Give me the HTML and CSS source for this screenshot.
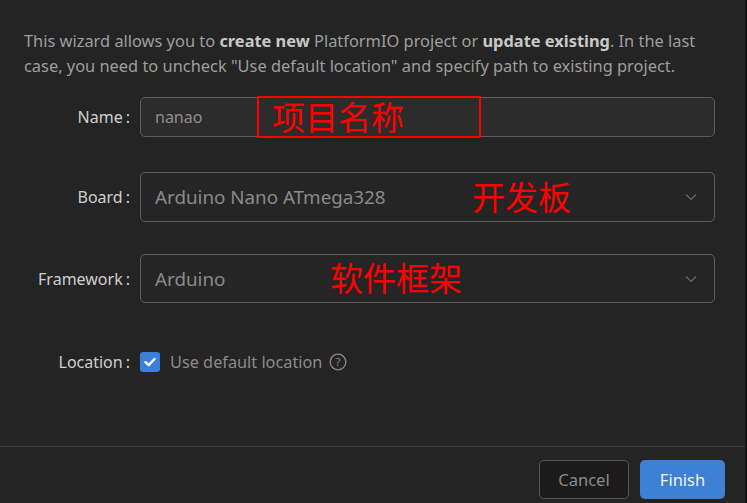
FILE: index.html
```html
<!DOCTYPE html>
<html>
<head>
<meta charset="utf-8">
<link rel="stylesheet" href="styles.css">
</head>
<body>
<div class="dialog">
  <div class="content">
    <p class="intro">This wizard allows you to <b>create new</b> PlatformIO project or <b>update existing</b>. In the last case, you need to uncheck "Use default location" and specify path to existing project.</p>
    <div class="form">
      <div class="row row-name">
        <label class="label">Name<span class="colon">:</span></label>
        <div class="field input">
          <span class="value">nanao</span>
          <div class="note note-box"><span class="note-text">项目名称</span></div>
        </div>
      </div>
      <div class="row row-board">
        <label class="label">Board<span class="colon">:</span></label>
        <div class="field select">
          <span class="value">Arduino Nano ATmega328</span>
          <span class="note note-board">开发板</span>
          <svg class="chev" width="12" height="8" viewBox="0 0 12 8"><path d="M1 1.5 L6 6.5 L11 1.5" fill="none" stroke="#6b6b6b" stroke-width="1.2"/></svg>
        </div>
      </div>
      <div class="row row-fw">
        <label class="label">Framework<span class="colon">:</span></label>
        <div class="field select select-fw">
          <span class="value">Arduino</span>
          <span class="note note-fw">软件框架</span>
          <svg class="chev" width="12" height="8" viewBox="0 0 12 8"><path d="M1 1.5 L6 6.5 L11 1.5" fill="none" stroke="#6b6b6b" stroke-width="1.2"/></svg>
        </div>
      </div>
      <div class="row row-loc">
        <label class="label">Location<span class="colon">:</span></label>
        <div class="check">
          <span class="box"><svg width="20" height="20" viewBox="0 0 20 20"><path d="M5.5 10.2 L8.6 13.2 L14.6 7" fill="none" stroke="#fff" stroke-width="2.4" stroke-linecap="round" stroke-linejoin="round"/></svg></span>
          <span class="check-text">Use default location</span>
          <svg class="help" width="18" height="18" viewBox="0 0 18 18"><circle cx="9" cy="9" r="7.8" fill="none" stroke="#8a8a8a" stroke-width="1.3"/><text x="9" y="13.2" text-anchor="middle" font-family="Noto Sans, sans-serif" font-size="11.5" fill="#8a8a8a">?</text></svg>
        </div>
      </div>
    </div>
  </div>
  <div class="footer">
    <button class="btn btn-cancel">Cancel</button>
    <button class="btn btn-finish">Finish</button>
  </div>
  <div class="edge"></div>
</div>
</body>
</html>
```
FILE: styles.css
```css
html, body {
  margin: 0;
  padding: 0;
  background: #242424;
  height: 100%;
  overflow: hidden;
}
body {
  font-family: "Noto Sans", "Open Sans", sans-serif;
}
.dialog {
  position: relative;
  width: 747px;
  height: 503px;
  display: flex;
  flex-direction: column;
}
.content {
  padding: 28px 32px 0 24px;
  flex: 1;
}
.intro {
  margin: 0;
  width: 690px;
  font-size: 16.4px;
  line-height: 25px;
  color: #9e9e9e;
}
.intro b {
  color: #c8c8c8;
  font-weight: 700;
}
.form {
  display: flex;
  flex-direction: column;
}
.row {
  display: grid;
  grid-template-columns: 106px 1fr;
  column-gap: 10px;
  align-items: center;
}
.row-name { margin-top: 19px; }
.row-board { margin-top: 35px; }
.row-fw { margin-top: 32px; }
.row-loc { margin-top: 48px; }
.label {
  text-align: right;
  font-size: 16px;
  color: #cfcfcf;
  white-space: nowrap;
}
.colon {
  margin-left: 3px;
}
.field {
  position: relative;
  box-sizing: border-box;
  border: 1px solid #5e5e5e;
  border-radius: 5px;
  display: flex;
  align-items: center;
  padding-left: 14px;
}
.input {
  height: 40px;
  background: #2c2c2c;
}
.input .value {
  font-size: 16px;
  color: #8e8e8e;
}
.select {
  height: 50px;
  background: #252525;
}
.select-fw {
  height: 49px;
}
.select .value {
  font-size: 18.8px;
  color: #8a8a8a;
}
.chev {
  position: absolute;
  right: 17px;
  top: 50%;
  margin-top: -4px;
}
.note {
  position: absolute;
  color: #ff0000;
  font-family: "Noto Sans CJK SC", sans-serif;
  font-size: 33px;
  line-height: 1;
  white-space: nowrap;
}
.note-box {
  left: 116px;
  top: -2px;
  width: 224px;
  height: 42px;
  box-sizing: border-box;
  border: 2px solid #ff0000;
}
.note-text {
  position: absolute;
  left: 13px;
  top: 2px;
}
.note-board {
  left: 331px;
  top: 7px;
}
.note-fw {
  left: 189px;
  top: 6px;
}
.check {
  display: flex;
  align-items: center;
  height: 22px;
}
.box {
  width: 20px;
  height: 20px;
  border-radius: 3px;
  background: #3b7fd9;
  display: block;
}
.box svg { display: block; }
.check-text {
  margin-left: 10px;
  font-size: 16.3px;
  color: #8c8c8c;
}
.help {
  margin-left: 7px;
}
.footer {
  border-top: 1px solid #3a3a3a;
  height: 57px;
  display: flex;
  justify-content: flex-end;
  align-items: flex-start;
  padding: 13px 22px 0 0;
  gap: 11px;
  box-sizing: border-box;
  margin-bottom: 0;
}
.btn {
  height: 39px;
  border-radius: 5px;
  font-family: "Noto Sans", sans-serif;
  font-size: 16.5px;
  padding: 0;
  cursor: pointer;
}
.btn-cancel {
  width: 90px;
  background: #1b1b1b;
  border: 1px solid #565656;
  color: #8a8a8a;
}
.btn-finish {
  width: 85px;
  background: #3e80d4;
  border: none;
  color: #f2f2f2;
}
.edge {
  position: absolute;
  right: 0;
  top: 0;
  width: 2px;
  height: 503px;
  background: #141414;
}
```
